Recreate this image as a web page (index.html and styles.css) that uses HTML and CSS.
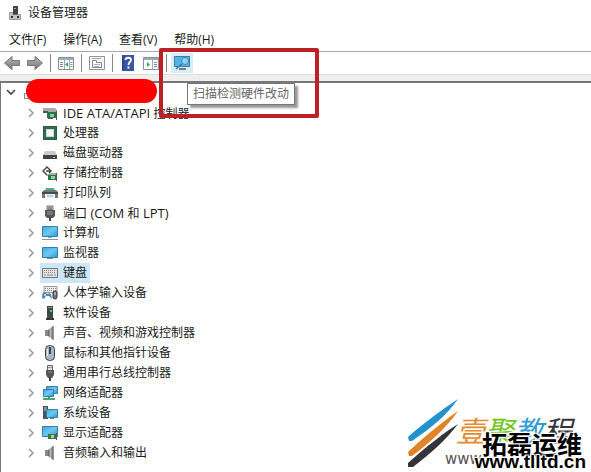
FILE: index.html
```html
<!DOCTYPE html>
<html lang="zh-CN">
<head>
	<title>设备管理器</title>
	<meta charset="UTF-8">
	<link rel="stylesheet" href="styles.css">
</head>
<body>
	<!-- shared icons -->
	<svg class="icon_defs" aria-hidden="true">
		<defs>
			<linearGradient id="blue" x1="0" y1="0" x2="1" y2="1">
				<stop offset="0" stop-color="#3ea6de" /><stop offset="0.5" stop-color="#6cc8f2" /><stop offset="1" stop-color="#2d9ad8" />
			</linearGradient>
			<linearGradient id="gray" x1="0" y1="0" x2="1" y2="0">
				<stop offset="0" stop-color="#555" /><stop offset="0.5" stop-color="#bbb" /><stop offset="1" stop-color="#666" />
			</linearGradient>
			<linearGradient id="arrow" x1="0" y1="0" x2="0" y2="1">
				<stop offset="0" stop-color="#b5b5b5" /><stop offset="1" stop-color="#777" />
			</linearGradient>
		</defs>
		<symbol id="i_card" viewBox="0 0 16 16">
			<path d="M1 3h12l2 2v3H1z" fill="#aaa" /><path d="M1 6h5v2H1z" fill="#555" />
			<path d="M5 7h10v6H5z" fill="#267447" /><path d="M8 9h4v3H8z" fill="#8fc7a5" /><path d="M14 6h1v9h-1zM6 13h5v1H6z" fill="#554" />
		</symbol>
		<symbol id="i_cpu" viewBox="0 0 16 16">
			<path d="M1 1h14v14H1z" fill="#326b50" /><path d="M1.500 1.500h13v13h-13z" fill="none" stroke="#244e3b" stroke-dasharray="1 1" />
			<path d="M4 4h8v8H4z" fill="#c9dcd0" /><path d="M5 5h6v6H5z" fill="#f4f7f5" />
		</symbol>
		<symbol id="i_disk" viewBox="0 0 16 16">
			<path d="M3 6h10l2 4H1z" fill="#c9c9c9" /><path d="M1 10h14v4H1z" fill="#404448" /><path d="M11 12h2v1h-2z" fill="#7fd68a" />
		</symbol>
		<symbol id="i_storage" viewBox="0 0 16 16">
			<path d="M8 5L5 2 1 6l4 4M4 6h5M7 4l2 2-2 2" fill="none" stroke="#444" stroke-width="1.4" />
			<path d="M4 10l4-2h7v3H4z" fill="#aaa" /><path d="M6 10h9v5H6z" fill="#267447" /><path d="M9 11h4v3H9z" fill="#9bcbad" /><path d="M14 8h1v8h-1z" fill="#555" />
		</symbol>
		<symbol id="i_printer" viewBox="0 0 16 16">
			<path d="M4 3h8l1 3H3z" fill="#4fb08a" /><path d="M0 7l2-2h12l2 2v6h-3V9H3v4H0z" fill="#777" /><path d="M0 7h16v2H0z" fill="#484c4f" />
			<path d="M4 9h8l1 4H3z" fill="#e4f2f8" /><path d="M5 11h6" stroke="#86b5ca" />
		</symbol>
		<symbol id="i_port" viewBox="0 0 16 16">
			<path d="M5 1h6v4H5z" fill="#ccc" stroke="#777" /><path d="M7 2v3M9 2v3" stroke="#555" />
			<path d="M3 5h10v6l-2 2H5l-2-2z" fill="#555" /><path d="M5 7h6M5 9h6" stroke="#999" /><path d="M7 12h2v4H7z" fill="#444" />
		</symbol>
		<symbol id="i_pc" viewBox="0 0 16 16">
			<path d="M0.5 1.5h15v10h-15z" fill="url(#blue)" stroke="#377fa8" /><path d="M6 12h4v1H6z" fill="#8ea4b0" /><path d="M0 14.500h16" stroke="#7a99ac" />
		</symbol>
		<symbol id="i_monitor" viewBox="0 0 16 16">
			<path d="M0.5 2.5h15v10h-15z" fill="url(#blue)" stroke="#377fa8" /><path d="M5 13h6v1H5z" fill="#6d8493" />
		</symbol>
		<symbol id="i_keyboard" viewBox="0 0 16 16">
			<path d="M0.5 3.5h15v9h-15z" fill="#e2e2e2" stroke="#777" /><path d="M2 5.500h12M2 7.500h12" stroke="#888" stroke-dasharray="1 1" /><path d="M2 10h2M5 10h6M12 10h2" stroke="#888" />
		</symbol>
		<symbol id="i_hid" viewBox="0 0 16 16">
			<path d="M2 1.500h13v6H2z" fill="#eee" stroke="#999" /><path d="M3 3.500h11M3 5.500h11" stroke="#888" stroke-dasharray="1 1" />
			<path d="M0 13c0-6 2-7 4-5s3-1 5 1l1 5-3-3H4l-2 3z" fill="#5489ad" /><path d="M3 9v2M2 10h2" stroke="#dcecf5" />
			<rect x="11" y="6" width="4" height="8" rx="2" fill="#777" stroke="#333" /><path d="M13 7v3" stroke="#ddd" />
		</symbol>
		<symbol id="i_software" viewBox="0 0 16 16">
			<path d="M5 1h6v12H5z" fill="#3e4944" /><path d="M6 2h4v1H6z" fill="#89948e" /><path d="M8 5h2v2H8z" fill="#58c585" /><path d="M4 13h8v2H4z" fill="#343a37" />
		</symbol>
		<symbol id="i_sound" viewBox="0 0 16 16">
			<path d="M3 5h3v6H3z" fill="#888" /><path d="M6 5l5-4v14l-5-4z" fill="url(#gray)" /><path d="M11.500 1v14" stroke="#999" />
		</symbol>
		<symbol id="i_mouse" viewBox="0 0 16 16">
			<rect x="3.500" y="0.500" width="9" height="15" rx="4" fill="#a9b8c5" stroke="#374452" /><path d="M8 2v7" stroke="#374452" stroke-width="2" /><path d="M5.500 4v7" stroke="#e2eaf0" />
		</symbol>
		<symbol id="i_usb" viewBox="0 0 16 16">
			<path d="M5.500 0.500h5v5h-5z" fill="#ddd" stroke="#666" /><path d="M7 2v1M9 2v1" stroke="#555" />
			<path d="M4 5h8v5l-2 3H6l-2-3z" fill="#555" /><path d="M6 7h4" stroke="#888" /><path d="M7 12h2v4H7z" fill="#444" />
		</symbol>
		<symbol id="i_network" viewBox="0 0 16 16">
			<path d="M4.500 1.500h11v7h-11z" fill="url(#blue)" stroke="#377fa8" /><path d="M1.500 4.500h10v7h-10z" fill="url(#blue)" stroke="#377fa8" />
			<path d="M6 12h2v1H6z" fill="#777" /><path d="M1 14h12" stroke="#48a76a" stroke-width="2" />
		</symbol>
		<symbol id="i_system" viewBox="0 0 16 16">
			<path d="M1 1h5v13H1z" fill="#47545f" /><path d="M2 3h3M2 5h3" stroke="#c3ced7" /><path d="M4.500 4.500h11v8h-11z" fill="url(#blue)" stroke="#377fa8" /><path d="M8 13h4v1H8z" fill="#688" />
		</symbol>
		<symbol id="i_display" viewBox="0 0 16 16">
			<path d="M0.500 1.500h15v10h-15z" fill="url(#blue)" stroke="#377fa8" /><path d="M6 9h9v5H6z" fill="#327b45" /><path d="M9 10h3v3H9z" fill="#c4c985" /><path d="M14 8h1v7h-1z" fill="#555" />
		</symbol>
		<symbol id="i_chevron" viewBox="0 0 8 12">
			<path d="M2 2l4 4-4 4" fill="none" stroke="#999" stroke-width="1.500" />
		</symbol>
	</svg>

	<div id="manager">
		<header class="title_bar">
			<svg class="app_icon" viewBox="0 0 14 16" aria-hidden="true">
				<path d="M5 1h5v8H5z" fill="#444" /><path d="M6 3h2v1H6z" fill="#aaa" />
				<path d="M1.500 7.500h3v2h8v5h-11z" fill="#c4c4c4" stroke="#999" /><path d="M3 11h2v2H3zM9 11h2v2H9z" fill="#333" /><path d="M5 9h4v1H5z" fill="#666" />
			</svg>
			<h1>设备管理器</h1>
		</header>
		<nav class="menu">
			<button type="button">文件(F)</button>
			<button type="button">操作(A)</button>
			<button type="button">查看(V)</button>
			<button type="button">帮助(H)</button>
		</nav>
		<div class="toolbar">
			<button type="button" aria-label="后退"><svg viewBox="0 0 16 16"><path d="M0.500 8L8 1.500v4h7.500v5H8v4z" fill="url(#arrow)" stroke="#777" /></svg></button>
			<button type="button" aria-label="前进"><svg viewBox="0 0 16 16"><path d="M15.500 8L8 1.500v4H0.500v5H8v4z" fill="url(#arrow)" stroke="#777" /></svg></button>
			<span class="separator"></span>
			<button type="button" aria-label="显示控制台树"><svg viewBox="0 0 16 16">
				<path d="M0.500 2.500h15v12h-15z" fill="#fff" stroke="#8292a1" /><path d="M1 4h14" stroke="#9aabba" stroke-width="2" /><path d="M6.500 5v9M11.500 5v9" stroke="#9aabba" />
				<path d="M2 7.500h3M2 9.500h3M2 11.500h3M12.500 7.500h2M12.500 9.500h2M12.500 11.500h2" stroke="#889" /><path d="M10 7v5L7 9.500z" fill="#3ca557" />
			</svg></button>
			<span class="separator"></span>
			<button type="button" aria-label="属性"><svg viewBox="0 0 16 16">
				<path d="M0.500 1.500h15v13h-15z" fill="#fafafa" stroke="#8d969d" /><path d="M3 3.500h9" stroke="#9aa" /><path d="M3.500 5.500h4v2h5v5h-9z" fill="#fff" stroke="#889" /><path d="M5 9.500h6M5 11.500h5" stroke="#aab" />
			</svg></button>
			<span class="separator"></span>
			<button type="button" aria-label="帮助"><svg viewBox="0 0 16 16">
				<path d="M2 0h12v16H2z" fill="#3955a0" /><path d="M3 1v14" stroke="#223a7b" /><path d="M5.500 5c0-3 5.500-3 5.500 0 0 2-2.500 2-2.500 5" fill="none" stroke="#fff" stroke-width="1.800" /><path d="M7.500 11.500h2v2h-2z" fill="#fff" />
			</svg></button>
			<button type="button" aria-label="显示操作窗格"><svg viewBox="0 0 16 16">
				<path d="M0.500 2.500h15v12h-15z" fill="#fff" stroke="#8292a1" /><path d="M1 4h14" stroke="#9aabba" stroke-width="2" /><path d="M9.500 5v9" stroke="#9aabba" />
				<path d="M11 7.500h3M11 9.500h3M11 11.500h3" stroke="#889" /><path d="M4 7v5l3-2.500z" fill="#3ca557" />
			</svg></button>
			<div class="scan_group">
				<span class="separator"></span>
				<button type="button" class="scan" aria-label="扫描检测硬件改动"><svg viewBox="0 0 18 18">
					<path d="M1.500 2.500h15v10h-15z" fill="#51b4e5" stroke="#3b7da2" /><circle cx="12" cy="7" r="3.500" fill="#8bd3f5" stroke="#3f86ae" /><path d="M9 10l-6 5" stroke="#39769a" stroke-width="1.500" /><path d="M6 15h7" stroke="#6b7f8c" stroke-width="2" />
				</svg></button>
			</div>
		</div>
		<main class="tree">
			<div class="root">
				<button type="button" aria-label="折叠"><svg viewBox="0 0 12 8"><path d="M2 1l4 4 4-4" fill="none" stroke="#444" stroke-width="1.600" /></svg></button>
				<span class="root_icon"></span>
				<span class="redacted"></span>
			</div>
			<ul>
				<li><button type="button" aria-label="展开"><svg><use href="#i_chevron" /></svg></button><a href="#"><svg><use href="#i_card" /></svg><span><span class="latin">IDE ATA/ATAPI </span>控制器</span></a></li>
				<li><button type="button" aria-label="展开"><svg><use href="#i_chevron" /></svg></button><a href="#"><svg><use href="#i_cpu" /></svg>处理器</a></li>
				<li><button type="button" aria-label="展开"><svg><use href="#i_chevron" /></svg></button><a href="#"><svg><use href="#i_disk" /></svg>磁盘驱动器</a></li>
				<li><button type="button" aria-label="展开"><svg><use href="#i_chevron" /></svg></button><a href="#"><svg><use href="#i_storage" /></svg>存储控制器</a></li>
				<li><button type="button" aria-label="展开"><svg><use href="#i_chevron" /></svg></button><a href="#"><svg><use href="#i_printer" /></svg>打印队列</a></li>
				<li><button type="button" aria-label="展开"><svg><use href="#i_chevron" /></svg></button><a href="#"><svg><use href="#i_port" /></svg><span>端口<span class="latin"> (COM </span>和<span class="latin"> LPT)</span></span></a></li>
				<li><button type="button" aria-label="展开"><svg><use href="#i_chevron" /></svg></button><a href="#"><svg><use href="#i_pc" /></svg>计算机</a></li>
				<li><button type="button" aria-label="展开"><svg><use href="#i_chevron" /></svg></button><a href="#"><svg><use href="#i_monitor" /></svg>监视器</a></li>
				<li><button type="button" aria-label="展开"><svg><use href="#i_chevron" /></svg></button><a href="#" class="selected"><svg><use href="#i_keyboard" /></svg>键盘</a></li>
				<li><button type="button" aria-label="展开"><svg><use href="#i_chevron" /></svg></button><a href="#"><svg><use href="#i_hid" /></svg>人体学输入设备</a></li>
				<li><button type="button" aria-label="展开"><svg><use href="#i_chevron" /></svg></button><a href="#"><svg><use href="#i_software" /></svg>软件设备</a></li>
				<li><button type="button" aria-label="展开"><svg><use href="#i_chevron" /></svg></button><a href="#"><svg><use href="#i_sound" /></svg>声音、视频和游戏控制器</a></li>
				<li><button type="button" aria-label="展开"><svg><use href="#i_chevron" /></svg></button><a href="#"><svg><use href="#i_mouse" /></svg>鼠标和其他指针设备</a></li>
				<li><button type="button" aria-label="展开"><svg><use href="#i_chevron" /></svg></button><a href="#"><svg><use href="#i_usb" /></svg>通用串行总线控制器</a></li>
				<li><button type="button" aria-label="展开"><svg><use href="#i_chevron" /></svg></button><a href="#"><svg><use href="#i_network" /></svg>网络适配器</a></li>
				<li><button type="button" aria-label="展开"><svg><use href="#i_chevron" /></svg></button><a href="#"><svg><use href="#i_system" /></svg>系统设备</a></li>
				<li><button type="button" aria-label="展开"><svg><use href="#i_chevron" /></svg></button><a href="#"><svg><use href="#i_display" /></svg>显示适配器</a></li>
				<li><button type="button" aria-label="展开"><svg><use href="#i_chevron" /></svg></button><a href="#"><svg><use href="#i_sound" /></svg>音频输入和输出</a></li>
			</ul>
		</main>

		<div class="tooltip" role="tooltip">扫描检测硬件改动</div>
		<div class="highlight_box"></div>

		<div class="watermark">
			<svg class="strokes" viewBox="0 0 54 70" aria-hidden="true">
				<path d="M51 1C38 10 20 22 1 39l1 4h3C24 30 40 17 51 1z" fill="#2492cd" />
				<path d="M51 13C38 22 20 36 1 54l1 4h3C24 44 40 29 51 13z" fill="#e08427" />
				<path d="M51 26C38 34 20 48 1 65v4h5C24 55 40 41 51 26z" fill="#35343b" />
			</svg>
			<div class="brand"><span class="orange">壹</span><span class="green">聚</span><span class="blue">教</span><span class="dark">程</span></div>
			<div class="brand_url">www</div>
			<div class="site">
				<span class="site_name">拓磊运维</span>
				<span class="site_url">www.tlltd.cn</span>
			</div>
		</div>
	</div>
</body>
</html>
```

FILE: styles.css
```css
* {
	box-sizing: border-box;
}

body {
	margin: 0;
	background-color: white;
	color: #1a1a1a;
	font-family: "Open Sans", "Noto Sans CJK SC", sans-serif;
	font-size: 12px;
	line-height: 20px;
}

button {
	display: flex;
	align-items: center;
	justify-content: center;
	margin: 0;
	padding: 0;
	border: none;
	background: none;
	color: inherit;
	font: inherit;
}

.icon_defs {
	position: absolute;
	width: 0;
	height: 0;
}

#manager {
	position: relative;
	display: flex;
	flex-direction: column;
	min-height: 100vh;
	overflow: hidden;
}

.title_bar {
	display: flex;
	align-items: center;
	gap: 6px;
	height: 26px;
	padding-left: 8px;
}

.title_bar h1 {
	margin: 0;
	font-size: 12px;
	font-weight: normal;
}

.app_icon {
	width: 14px;
	height: 16px;
}

.menu {
	display: flex;
	align-items: center;
	gap: 17px;
	height: 26px;
	padding: 2px 9px 0;
	border-bottom: 1px solid #a8a8a8;
}

/* toolbar */
.toolbar {
	display: flex;
	align-items: center;
	gap: 7px;
	height: 23px;
	padding-left: 4px;
	border-bottom: 1px solid #ddd;
}

.toolbar svg {
	width: 16px;
	height: 16px;
}

.separator {
	width: 1px;
	height: 18px;
	background-color: #888;
}

.scan_group {
	display: flex;
	align-items: center;
	gap: 4px;
}

.toolbar .scan {
	width: 22px;
	height: 20px;
	background-color: #d8edf9;
}

.scan svg {
	width: 18px;
	height: 18px;
}

/* device tree */
.tree {
	position: relative;
	flex: 1;
	margin-top: 6px;
	padding-bottom: 8px;
	border-top: 2px solid #777;
	border-left: 1px solid #777;
	box-shadow: 0 -6px 0 #efefef;
}

.root {
	position: relative;
	display: flex;
	align-items: center;
	height: 20px;
	padding-left: 4px;
}

.root svg {
	width: 12px;
	height: 8px;
}

.root_icon {
	width: 8px;
	height: 6px;
	margin: 6px 0 0 7px;
	border: 1px solid #888;
}

.redacted {
	position: absolute;
	left: 25px;
	top: -4px;
	width: 131px;
	height: 24px;
	border-radius: 12px;
	background-color: #fe0000;
}

.tree ul {
	margin: 0;
	padding: 0 0 0 26px;
	list-style: none;
}

.tree li {
	display: flex;
	align-items: center;
	gap: 5px;
	height: 20px;
}

.tree li button svg {
	width: 8px;
	height: 12px;
}

.tree a {
	display: flex;
	align-items: center;
	gap: 5px;
	height: 20px;
	padding: 0 3px 0 2px;
	color: inherit;
	text-decoration: none;
	white-space: nowrap;
}

.tree a svg {
	width: 16px;
	height: 16px;
}

.latin {
	font-size: 13px;
	white-space: pre;
}

.tree .selected {
	background-color: #cde6f8;
}

.tooltip {
	position: absolute;
	left: 187px;
	top: 83px;
	padding: 0 5px;
	border: 1px solid #777;
	background-color: white;
	box-shadow: 3px 3px 2px #999;
	color: #666;
}

.highlight_box {
	position: absolute;
	left: 159px;
	top: 48px;
	width: 160px;
	height: 70px;
	border: 4px solid #bd2025;
	border-radius: 2px;
}

/* corner logo */
.watermark {
	position: absolute;
	right: 0;
	bottom: 0;
	width: 184px;
	height: 74px;
}

.strokes {
	position: absolute;
	left: 0;
	top: 0;
	width: 54px;
	height: 70px;
}

.brand {
	position: absolute;
	left: 49px;
	top: 17px;
	display: flex;
	font-size: 29px;
	font-style: italic;
	line-height: 32px;
}

.orange {
	color: #e38c2e;
}

.green {
	color: #72c51b;
}

.blue {
	color: #329bd2;
}

.dark {
	color: #35343b;
}

.brand_url {
	position: absolute;
	left: 38px;
	top: 52px;
	color: #555;
	font-family: "DejaVu Sans", sans-serif;
	font-size: 15px;
	line-height: 18px;
}

.site {
	position: absolute;
	right: 5px;
	top: 36px;
	display: flex;
	flex-direction: column;
	align-items: flex-end;
	color: black;
	font-weight: bold;
	text-shadow: 1px 1px 1px white, -1px -1px 1px white, 1px -1px 1px white, -1px 1px 1px white, 0 0 3px white;
}

.site_name {
	padding-right: 4px;
	font-size: 25px;
	line-height: 20px;
}

.site_url {
	font-family: "Liberation Sans", sans-serif;
	font-size: 19px;
	line-height: 16px;
}
```
